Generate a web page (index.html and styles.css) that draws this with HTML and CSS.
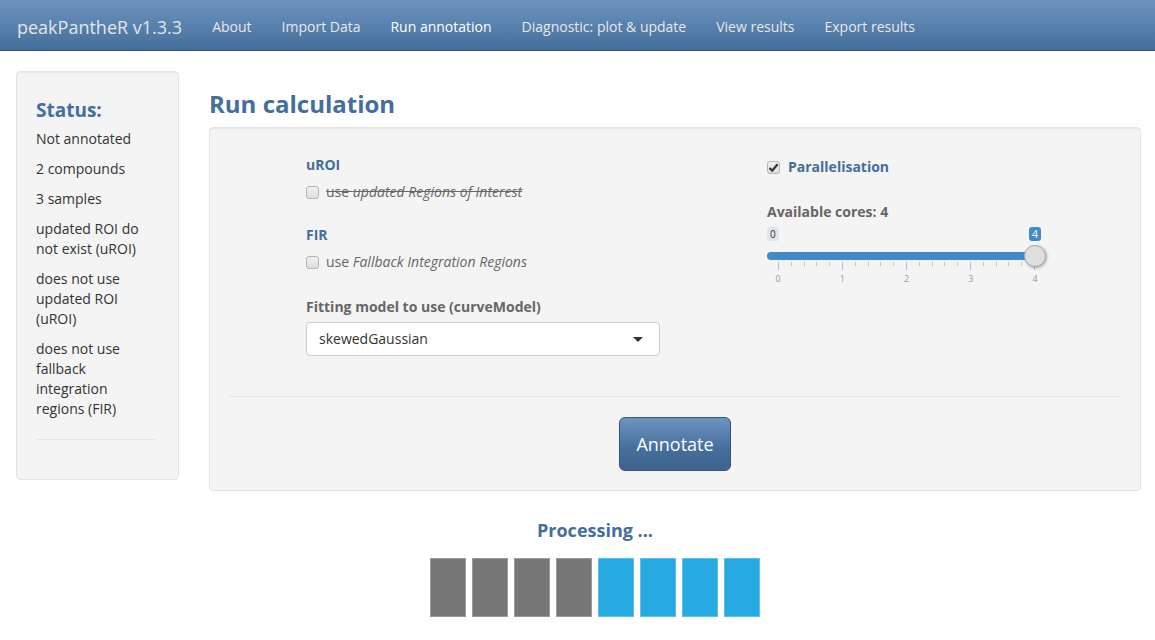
FILE: index.html
```html
<!DOCTYPE html>
<html>
<head>
<meta charset="utf-8">
<title>peakPantheR</title>
<link rel="stylesheet" href="styles.css">
</head>
<body>
<nav class="navbar">
  <span class="brand">peakPantheR v1.3.3</span>
  <a class="nav-link">About</a>
  <a class="nav-link">Import Data</a>
  <a class="nav-link active">Run annotation</a>
  <a class="nav-link">Diagnostic: plot &amp; update</a>
  <a class="nav-link">View results</a>
  <a class="nav-link">Export results</a>
</nav>

<div class="page">
  <aside class="sidebar">
    <h4 class="status-title">Status:</h4>
    <p>Not annotated</p>
    <p>2 compounds</p>
    <p>3 samples</p>
    <p>updated ROI do not exist (uROI)</p>
    <p>does not use updated ROI (uROI)</p>
    <p>does not use fallback integration regions (FIR)</p>
    <hr class="side-hr">
  </aside>

  <main class="main">
    <h2 class="title">Run calculation</h2>
    <section class="panel">
      <div class="cols">
        <div class="col-left">
          <div class="sec-label first">uROI</div>
          <div class="cb-row disabled">
            <span class="cb"></span>
            <span class="cb-text strike">use <em>updated Regions of Interest</em></span>
          </div>
          <div class="sec-label fir">FIR</div>
          <div class="cb-row second">
            <span class="cb"></span>
            <span class="cb-text">use <em>Fallback Integration Regions</em></span>
          </div>
          <div class="gray-label">Fitting model to use (curveModel)</div>
          <div class="select">
            <span>skewedGaussian</span>
            <span class="caret"></span>
          </div>
        </div>
        <div class="col-right">
          <div class="cb-row para">
            <span class="cb checked">
              <svg width="11" height="11" viewBox="0 0 11 11"><path d="M1.5 6 L4.2 8.6 L9.6 2.2" fill="none" stroke="#333" stroke-width="2.2"/></svg>
            </span>
            <span class="para-text">Parallelisation</span>
          </div>
          <div class="gray-label cores">Available cores: 4</div>
          <div class="slider">
            <div class="minmax">
              <span class="mm-min">0</span>
              <span class="mm-max">4</span>
            </div>
            <div class="track">
              <div class="bar"></div>
              <span class="handle"></span>
            </div>
            <div class="ticks">
              <i class="major"></i><i></i><i></i><i></i><i></i>
              <i class="major"></i><i></i><i></i><i></i><i></i>
              <i class="major"></i><i></i><i></i><i></i><i></i>
              <i class="major"></i><i></i><i></i><i></i><i></i>
              <i class="major"></i>
            </div>
            <div class="tick-labels">
              <span>0</span><span>1</span><span>2</span><span>3</span><span>4</span>
            </div>
          </div>
        </div>
      </div>
      <hr class="panel-hr">
      <div class="btn-row">
        <button class="btn">Annotate</button>
      </div>
    </section>

    <div class="processing">
      <div class="proc-title">Processing ...</div>
      <div class="bars">
        <span class="b gray"></span>
        <span class="b gray"></span>
        <span class="b gray"></span>
        <span class="b gray"></span>
        <span class="b blue"></span>
        <span class="b blue"></span>
        <span class="b blue"></span>
        <span class="b blue"></span>
      </div>
    </div>
  </main>
</div>
</body>
</html>
```

FILE: styles.css
```css
* { box-sizing: border-box; }
html, body { margin: 0; padding: 0; background: #fff; }
body {
  font-family: "Open Sans", "Liberation Sans", sans-serif;
  font-size: 14px;
  line-height: 20px;
  color: #333;
}

.navbar {
  height: 51px;
  display: flex;
  align-items: center;
  background: linear-gradient(to bottom, #6d94bf 0%, #446e9b 100%);
  border-bottom: 1px solid #345578;
  padding-left: 17px;
  padding-top: 3px;
}
.brand {
  font-size: 18px;
  color: #e6e6e6;
  padding-right: 15px;
  line-height: 20px;
}
.nav-link {
  padding: 0 15px;
  color: #e8e8e8;
  font-size: 14px;
  cursor: pointer;
}
.nav-link.active { color: #fff; }

.page {
  display: flex;
  padding: 20px 14px 0 16px;
  gap: 30px;
  align-items: flex-start;
}

.sidebar {
  width: 163px;
  flex: none;
  background: #f4f4f4;
  border: 1px solid #e3e3e3;
  border-radius: 4px;
  padding: 19px 22px 19px 19px;
  box-shadow: inset 0 1px 1px rgba(0,0,0,0.05);
}
.status-title {
  margin: 8px 0 8px;
  font-size: 19px;
  line-height: 22px;
  font-weight: 700;
  color: #446e9b;
}
.sidebar p { margin: 0 0 10px; }
.side-hr {
  margin: 20px 0 20px;
  border: 0;
  border-top: 1px solid #e6e6e6;
}

.main { width: 932px; flex: none; }
.title {
  margin: 20px 0 10px;
  font-size: 24px;
  line-height: 26px;
  font-weight: 700;
  color: #446e9b;
}

.panel {
  background: #f4f4f4;
  border: 1px solid #e3e3e3;
  border-radius: 4px;
  padding: 19px;
  box-shadow: inset 0 1px 1px rgba(0,0,0,0.05);
}
.cols { display: flex; }
.col-left { width: 354px; margin-left: 77px; }
.col-right { width: 279px; margin-left: 107px; }

.sec-label {
  font-weight: 700;
  color: #446e9b;
}
.sec-label.first { margin-top: 8px; }
.sec-label.fir { margin-top: 23px; }

.cb-row {
  display: flex;
  align-items: center;
  margin-top: 7px;
  height: 20px;
}
.cb-row.second { margin-top: 7px; }
.cb {
  width: 13px;
  height: 13px;
  border: 1px solid #b4b4b4;
  border-radius: 3px;
  background: linear-gradient(#f0f0f0, #dedede);
  margin: 0 7px 0 0;
  display: inline-flex;
  align-items: center;
  justify-content: center;
  flex: none;
}
.cb svg { display: block; }
.cb-text { color: #666; }
.cb-text.strike { text-decoration: line-through; }

.gray-label {
  font-weight: 700;
  color: #666;
  margin-top: 25px;
}
.select {
  margin-top: 5px;
  height: 34px;
  background: #fff;
  border: 1px solid #ccc;
  border-radius: 4px;
  padding: 0 16px 0 12px;
  display: flex;
  align-items: center;
  justify-content: space-between;
  color: #333;
}
.caret {
  width: 0;
  height: 0;
  border-left: 5px solid transparent;
  border-right: 5px solid transparent;
  border-top: 5px solid #333;
}

.cb-row.para { margin-top: 10px; }
.cb.checked { margin-right: 8px; margin-left: 0; }
.para-text { font-weight: 700; color: #446e9b; }
.gray-label.cores { margin-top: 25px; }

.slider { margin-top: 5px; width: 279px; }
.minmax {
  display: flex;
  justify-content: space-between;
  height: 14px;
}
.mm-min, .mm-max {
  font-size: 10px;
  line-height: 14px;
  padding: 0 3px;
  border-radius: 3px;
}
.mm-min { background: #e1e4e9; color: #333; }
.mm-max { background: #428bca; color: #fff; margin-right: 5px; font-size: 11px; }

.track {
  position: relative;
  height: 22px;
  margin-top: 4px;
  display: flex;
  align-items: center;
}
.bar {
  height: 8px;
  width: 268px;
  background: #428bca;
  border-radius: 4px;
}
.handle {
  position: absolute;
  left: 257px;
  top: 0;
  width: 22px;
  height: 22px;
  border-radius: 50%;
  background: #dedede;
  border: 1px solid #aaa;
  box-shadow: 1px 1px 3px rgba(0,0,0,0.3);
}
.ticks {
  display: flex;
  justify-content: space-between;
  align-items: flex-start;
  width: 257px;
  margin-left: 11px;
  height: 9px;
  margin-top: -5px;
}
.ticks i {
  display: block;
  width: 1px;
  height: 4px;
  background: #b8c3d0;
}
.ticks i.major { height: 8px; background: #a4bede; }
.tick-labels {
  display: flex;
  justify-content: space-between;
  width: 277px;
  margin-left: 1px;
  font-size: 9px;
  line-height: 12px;
  color: #999;
  margin-top: 2px;
}
.tick-labels span { width: 20px; text-align: center; }

.panel-hr {
  margin: 40px 0 20px;
  border: 0;
  border-top: 1px solid #e6e6e6;
}
.btn-row { display: flex; justify-content: center; }
.btn {
  font-family: "Open Sans", "Liberation Sans", sans-serif;
  font-size: 18px;
  line-height: 24px;
  padding: 14px 16px;
  color: #fff;
  background: linear-gradient(to bottom, #6d94bf 0%, #446e9b 60%, #3e648d 100%);
  border: 1px solid #345578;
  border-radius: 6px;
}

.processing {
  margin-right: 160px;
  display: flex;
  flex-direction: column;
  align-items: center;
  padding-top: 27px;
}
.proc-title {
  font-size: 18px;
  line-height: 24px;
  font-weight: 700;
  color: #446e9b;
}
.bars {
  display: flex;
  gap: 6px;
  margin-top: 16px;
}
.b {
  width: 36px;
  height: 59px;
  display: block;
}
.b.gray { background: #777; border: 1px solid #999; }
.b.blue { background: #27aae1; border: 1px solid #5cc0ea; }
```
